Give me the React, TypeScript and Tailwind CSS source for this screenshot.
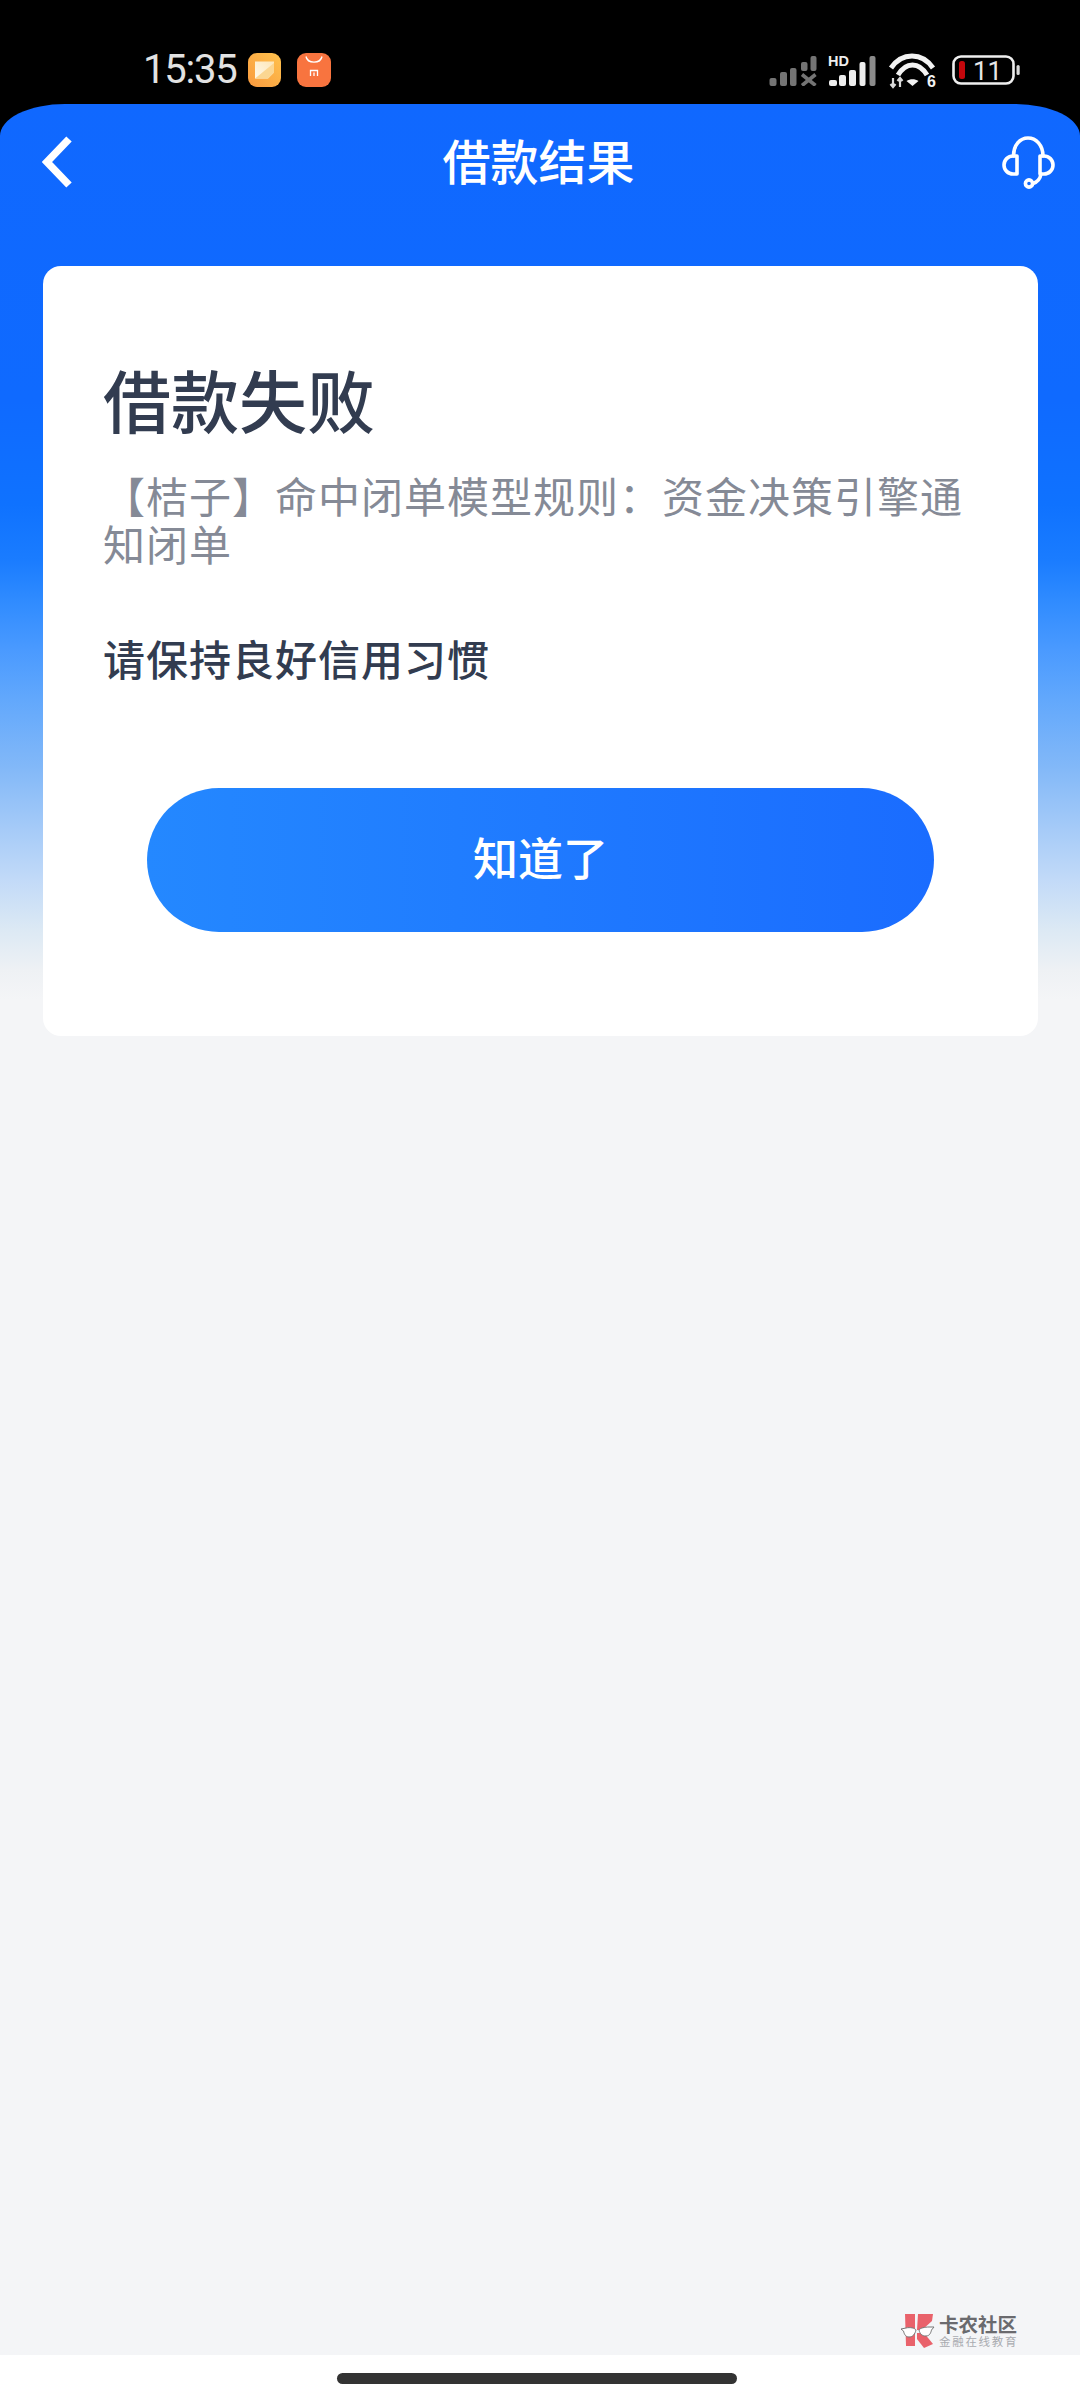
import React from "react";

const CJK = "font-['Noto_Sans_CJK_SC','Noto_Sans',sans-serif]";

function MessageIcon() {
  return (
    <svg width="34" height="34" viewBox="0 0 34 34">
      <defs>
        <linearGradient id="msgBg" x1="1" y1="0" x2="0" y2="1">
          <stop offset="0" stopColor="#ffc24d" />
          <stop offset="1" stopColor="#f99a3f" />
        </linearGradient>
        <linearGradient id="msgSheet" x1="1" y1="0" x2="0" y2="1">
          <stop offset="0" stopColor="#fde6b8" />
          <stop offset="1" stopColor="#fff8ea" />
        </linearGradient>
      </defs>
      <rect width="33" height="34" rx="9" fill="url(#msgBg)" />
      <path d="M7 8.5H26V19.5L20 25.5H7Z" fill="url(#msgSheet)" />
      <path d="M7 25.5L26 10V19.5L20 25.5Z" fill="#fbd691" />
    </svg>
  );
}

function StoreIcon() {
  return (
    <svg width="34" height="34" viewBox="0 0 34 34">
      <rect width="34" height="34" rx="9" fill="#f8743f" />
      <path d="M9 3.5C10.5 11 23.5 11 25 3.5" fill="none" stroke="#fff" strokeWidth="1.4" />
      <path d="M13.5 23V17.5H20.5V23M17 19.5V23" fill="none" stroke="#fff" strokeWidth="1.3" />
    </svg>
  );
}

function NoServiceSignal() {
  return (
    <svg width="49" height="31" viewBox="0 0 49 31" fill="#747474">
      <rect x="0.5" y="23" width="7" height="8" rx="2" />
      <rect x="11" y="17" width="7" height="14" rx="2" />
      <rect x="21" y="13" width="6.5" height="18" rx="2" />
      <rect x="32" y="7" width="6.5" height="9" rx="2" />
      <rect x="41.5" y="1" width="6" height="15" rx="2" />
      <path d="M33 19.5L46.5 30.5M46.5 19.5L33 30.5" stroke="#747474" strokeWidth="3.6" fill="none" />
    </svg>
  );
}

function HdSignal() {
  return (
    <svg width="49" height="31" viewBox="0 0 49 31" className="overflow-visible">
      <text x="0" y="11" fontFamily="'Liberation Sans',sans-serif" fontWeight="700" fontSize="14.5" fill="#eeeeee">
        HD
      </text>
      <g fill="#eeeeee">
        <rect x="1" y="25" width="8" height="6" rx="2" />
        <rect x="11" y="20" width="7" height="11" rx="2" />
        <rect x="21" y="15" width="7" height="16" rx="2" />
        <rect x="31.5" y="7" width="6" height="24" rx="2" />
      </g>
      <rect x="41.5" y="1" width="6" height="30" rx="2" fill="#8b8b8b" />
    </svg>
  );
}

function WifiSix() {
  return (
    <svg width="49" height="36" viewBox="0 0 49 36" className="overflow-visible">
      <g fill="none" stroke="#f2f2f2" strokeLinecap="butt">
        <path d="M3 16C14 0 34 0 45 16" strokeWidth="5" />
        <path d="M10 23C18 9.5 31 9.5 39 23" strokeWidth="5" />
      </g>
      <path d="M18.5 29C22 26.5 27 26.5 30.5 29L24.5 34Z" fill="#f2f2f2" />
      <path d="M5 26V35M2.5 32L5 35L7.5 32M12 35V26M9.5 29L12 26L14.5 29" fill="none" stroke="#d8d8d8" strokeWidth="2.2" />
      <text x="39" y="35" fontFamily="'Liberation Sans',sans-serif" fontWeight="700" fontSize="16" fill="#f2f2f2">
        6
      </text>
    </svg>
  );
}

function Battery() {
  return (
    <svg width="68" height="30" viewBox="0 0 68 30" className="overflow-visible">
      <rect x="1.5" y="1.5" width="60" height="27" rx="7.5" fill="none" stroke="#efefef" strokeWidth="2.6" />
      <rect x="7" y="6" width="6" height="18" rx="2.5" fill="#c4070c" />
      <text x="21" y="25" fontFamily="'Roboto',sans-serif" fontSize="26" fill="#e6e6e6">
        11
      </text>
      <rect x="64.5" y="10" width="3.2" height="10" rx="1.6" fill="#d8d8d8" />
    </svg>
  );
}

function Headset() {
  return (
    <svg width="53" height="53" viewBox="0 0 53 53" fill="none" stroke="#fff" strokeWidth="3.6" strokeLinejoin="round" strokeLinecap="round">
      <path d="M11.5 20C11.5 9 18 2 26 2C34 2 41 9 41 20" />
      <path d="M15 20H11A9 9 0 0 0 11 38H15Z" />
      <path d="M38 20H42A9 9 0 0 1 42 38H38Z" />
      <path d="M39 38C38 44 34 46.5 31 47.5" />
      <circle cx="27" cy="47.5" r="3.6" />
    </svg>
  );
}

function CommunityMark() {
  return (
    <svg width="36" height="36" viewBox="0 0 36 36">
      <path d="M5 1H15V33H6Z" fill="#e9626b" />
      <path d="M18 1H33L32 8L22 17H17Z" fill="#e9626b" />
      <path d="M17 20H24L33 31L24 35L17 26Z" fill="#e9626b" />
      <path d="M1 16L6 15C10 14 15 15 16 17C15 21 13 24 9 24C5 24 4 20 3.5 18Z" fill="#ffffff" stroke="#777" strokeWidth="1" />
      <path d="M34 14L29 14C25 14 20 15 19 17C20 21 22 23 26 23C30 23 31 19 31.5 17Z" fill="#ffffff" stroke="#777" strokeWidth="1" />
    </svg>
  );
}

export default function App() {
  return (
    <div className={`relative flex min-h-[2400px] w-[1080px] flex-col bg-white ${CJK}`}>
      {/* system status bar */}
      <div className="flex h-[104px] shrink-0 items-center bg-black pt-[36px] pl-[143px]">
        <span className="w-[105px] font-['Roboto',sans-serif] text-[40px] leading-none font-normal tracking-[-1.2px] text-[#e2e2e2]">15:35</span>
        <MessageIcon />
        <span className="ml-[15px]">
          <StoreIcon />
        </span>
        <div className="ml-[438px] flex items-center">
          <NoServiceSignal />
          <span className="ml-[10px]">
            <HdSignal />
          </span>
          <span className="ml-[11px]">
            <WifiSix />
          </span>
          <span className="ml-[15px]">
            <Battery />
          </span>
        </div>
      </div>

      {/* page body */}
      <div className="flex-1 bg-black">
        <div className="flex h-full min-h-[2251px] flex-col rounded-tl-[65px_32px] rounded-tr-[65px_32px] bg-[linear-gradient(180deg,#1068ff_0px,#0f6aff_296px,#0f72ff_400px,#1a7cff_456px,#2f8bff_496px,#4a9aff_546px,#62a8fc_596px,#82b8f8_663px,#a6cbf8_726px,#c2daf8_776px,#dce9f4_826px,#eef1f4_866px,#f4f5f7_896px)]">
          <header className="flex h-[116px] shrink-0 items-center justify-between pr-[25px] pl-[42px]">
            <svg width="30" height="52" viewBox="0 0 30 52" fill="none" stroke="#fff" strokeWidth="7.5">
              <path d="M27 3L5 26L27 49" />
            </svg>
            <h1 className="pb-[6px] pl-[3px] text-[48px] leading-none font-medium text-white">借款结果</h1>
            <Headset />
          </header>

          <section className="mt-[46px] mr-[42px] ml-[43px] rounded-[18px] bg-white px-[60px] pt-[93px] pb-[104px]">
            <h2 className="text-[68px] leading-[80px] font-medium text-[#323c50]">借款失败</h2>
            <p className="mt-[32px] text-[42px] leading-[48px] tracking-[1px] text-[#858a96]">
              {"【桔子】命中闭单模型规则\uFF1A资金决策引擎通知闭单"}
            </p>
            <p className="mt-[66px] text-[42px] leading-[50px] font-medium tracking-[1px] text-[#323c50]">请保持良好信用习惯</p>
            <button className="mx-[44px] mt-[105px] flex h-[144px] w-[787px] items-center justify-center rounded-[72px] bg-[linear-gradient(90deg,#2488ff,#1a6cff)] pb-[6px] text-[45px] font-medium text-white">
              知道了
            </button>
          </section>
        </div>
      </div>

      {/* gesture bar strip */}
      <div className="flex h-[45px] shrink-0 items-start justify-center bg-white pt-[18px] pr-[6px]">
        <div className="h-[11px] w-[400px] rounded-full bg-[#333333]" />
      </div>

      {/* community watermark */}
      <div className="absolute top-[2313px] left-[900px] flex items-start">
        <CommunityMark />
        <div className="ml-[3px] flex flex-col">
          <span className="text-[19.5px] leading-[21px] font-bold text-[#6a6a6e]">卡农社区</span>
          <span className="mt-[1px] text-[11.5px] leading-[13px] tracking-[1.7px] text-[#a9abb0]">金融在线教育</span>
        </div>
      </div>
    </div>
  );
}
